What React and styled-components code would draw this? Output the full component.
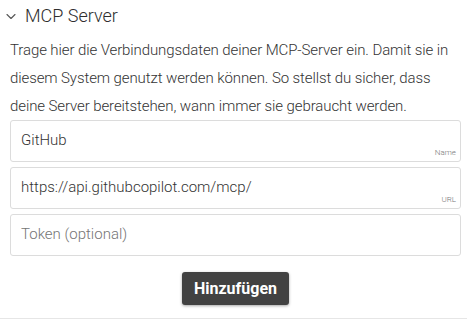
import React, { useState } from "react";
import styled, { createGlobalStyle } from "styled-components";

const GlobalStyle = createGlobalStyle`
  body {
    margin: 0;
    background: #ffffff;
    font-family: Roboto, "Liberation Sans", sans-serif;
  }
`;

const Section = styled.section`
  width: 467px;
  box-sizing: border-box;
  padding: 0 6px 13px 10px;
  border-bottom: 1px solid #e6e6e6;
`;

const Header = styled.div`
  display: flex;
  align-items: center;
  gap: 8px;
  margin-left: -5px;
  padding: 3px 0 7px;
  cursor: pointer;
`;

const Title = styled.h2`
  margin: 0;
  font-size: 18px;
  line-height: 26px;
  font-weight: 300;
  color: #2e2e2e;
`;

const Intro = styled.p`
  margin: 0;
  font-size: 15px;
  line-height: 28px;
  font-weight: 300;
  letter-spacing: -0.1px;
  color: #333333;
`;

const Fields = styled.div`
  display: flex;
  flex-direction: column;
  gap: 5px;
`;

const Field = styled.label`
  position: relative;
  display: block;
  height: 42px;
  box-sizing: border-box;
  border: 1px solid #dcdcdc;
  border-radius: 3px;
`;

const Input = styled.input`
  width: 100%;
  height: 100%;
  box-sizing: border-box;
  border: none;
  outline: none;
  background: transparent;
  padding: 0 10px 2px;
  font-family: Roboto, "Liberation Sans", sans-serif;
  font-size: 15px;
  font-weight: 300;
  color: #333333;

  &::placeholder {
    color: #757575;
  }
`;

const Hint = styled.span`
  position: absolute;
  right: 4px;
  bottom: 3px;
  font-size: 8px;
  line-height: 10px;
  font-weight: 300;
  color: #777777;
`;

const Actions = styled.div`
  display: flex;
  justify-content: center;
  padding-top: 16px;
`;

const Button = styled.button`
  height: 33px;
  padding: 0 12px;
  border: none;
  border-radius: 3px;
  background: #424242;
  color: #ffffff;
  font-family: Roboto, "Liberation Sans", sans-serif;
  font-size: 16px;
  font-weight: 700;
  box-shadow: 0 1px 3px rgba(0, 0, 0, 0.35);
  cursor: pointer;
`;

const Chevron = () => (
  <svg width="12" height="12" viewBox="0 0 12 12" fill="none">
    <path d="M2 4.5 L6 8.5 L10 4.5" stroke="#555" strokeWidth="1.1" strokeLinecap="round" strokeLinejoin="round" />
  </svg>
);

export default function App() {
  const [name, setName] = useState("GitHub");
  const [url, setUrl] = useState("https://api.githubcopilot.com/mcp/");
  const [token, setToken] = useState("");

  return (
    <>
      <GlobalStyle />
      <Section>
        <Header>
          <Chevron />
          <Title>MCP Server</Title>
        </Header>
        <Intro>
          Trage hier die Verbindungsdaten deiner MCP-Server ein. Damit sie in
          diesem System genutzt werden können. So stellst du sicher, dass
          deine Server bereitstehen, wann immer sie gebraucht werden.
        </Intro>
        <Fields>
          <Field>
            <Input value={name} onChange={(e) => setName(e.target.value)} />
            <Hint>Name</Hint>
          </Field>
          <Field>
            <Input value={url} onChange={(e) => setUrl(e.target.value)} />
            <Hint>URL</Hint>
          </Field>
          <Field>
            <Input
              value={token}
              placeholder="Token (optional)"
              onChange={(e) => setToken(e.target.value)}
            />
          </Field>
        </Fields>
        <Actions>
          <Button>Hinzufügen</Button>
        </Actions>
      </Section>
    </>
  );
}
